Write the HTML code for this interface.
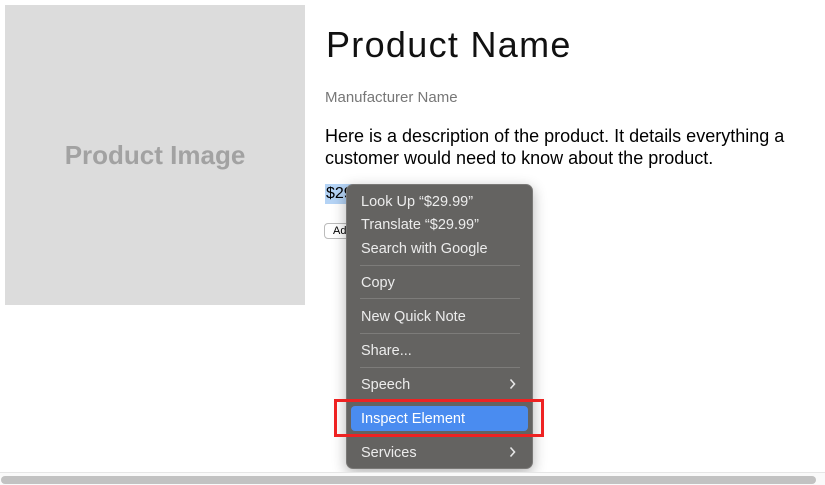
<!DOCTYPE html>
<html><head><meta charset="utf-8"><style>
*{margin:0;padding:0;box-sizing:border-box}
body{width:825px;height:485px;background:#fff;position:relative;overflow:hidden;font-family:"Liberation Sans",sans-serif}
.img{position:absolute;left:5px;top:5px;width:300px;height:300px;background:#dcdcdc;color:#a2a2a2;font-weight:bold;font-size:26px;display:flex;align-items:center;justify-content:center}
.t{position:absolute;left:326px;top:24px;font-size:36px;color:#111;letter-spacing:1.3px}
.m{position:absolute;left:325px;top:89px;font-size:15px;color:#777}
.d{position:absolute;left:325px;top:125px;font-size:18px;line-height:22px;color:#000;width:490px}
.p{position:absolute;left:325px;top:184px;font-size:16px;background:#b4d3f5;padding:0 1px;width:48px;height:20px;line-height:20px}
.b{position:absolute;left:324px;top:223px;width:40px;height:16px;border:1px solid #bbb;border-radius:4px;font-size:11px;padding-left:8px;line-height:14px}
.menu{position:absolute;left:346px;top:184px;width:187px;height:285px;background:#646361;border:1px solid #7a7977;border-radius:7px;box-shadow:0 4px 14px rgba(0,0,0,.3);color:#ececec;font-size:14.5px}
.it{position:absolute;left:14px}
.sep{position:absolute;left:13px;width:160px;height:1px;background:#7d7c7a}
.ch{position:absolute;right:16px}
.hl{position:absolute;left:4px;top:221px;width:177px;height:25px;background:#4a8cf0;border-radius:4px}
.red{position:absolute;left:334px;top:399px;width:210px;height:38px;border:3px solid #ee2222}
.track{position:absolute;left:0;top:472px;width:825px;height:13px;border-top:1px solid #e6e6e6;background:#fafafa}
.thumb{position:absolute;left:1px;top:476px;width:815px;height:8px;background:#c2c2c2;border-radius:4px}
</style></head><body>
<div class="img">Product Image</div>
<div class="t">Product Name</div>
<div class="m">Manufacturer Name</div>
<div class="d">Here is a description of the product. It details everything a customer would need to know about the product.</div>
<div class="p">$29.99</div>
<div class="b">Add</div>
<div class="menu">
<div class="it" style="top:9px">Look Up “$29.99”</div>
<div class="it" style="top:32px">Translate “$29.99”</div>
<div class="it" style="top:56px">Search with Google</div>
<div class="sep" style="top:80px"></div>
<div class="it" style="top:90px">Copy</div>
<div class="sep" style="top:113px"></div>
<div class="it" style="top:124px">New Quick Note</div>
<div class="sep" style="top:148px"></div>
<div class="it" style="top:158px">Share...</div>
<div class="sep" style="top:182px"></div>
<div class="it" style="top:192px">Speech</div>
<svg class="ch" style="top:193px" width="7" height="12" viewBox="0 0 7 12"><path d="M1.5 1.5L5.5 6L1.5 10.5" fill="none" stroke="#e6e6e6" stroke-width="1.6"/></svg>
<div class="sep" style="top:215px"></div>
<div class="hl"></div>
<div class="it" style="top:226px;color:#fff">Inspect Element</div>
<div class="it" style="top:260px">Services</div>
<svg class="ch" style="top:261px" width="7" height="12" viewBox="0 0 7 12"><path d="M1.5 1.5L5.5 6L1.5 10.5" fill="none" stroke="#e6e6e6" stroke-width="1.6"/></svg>
</div>
<div class="red"></div>
<div class="track"></div>
<div class="thumb"></div>
</body></html>
